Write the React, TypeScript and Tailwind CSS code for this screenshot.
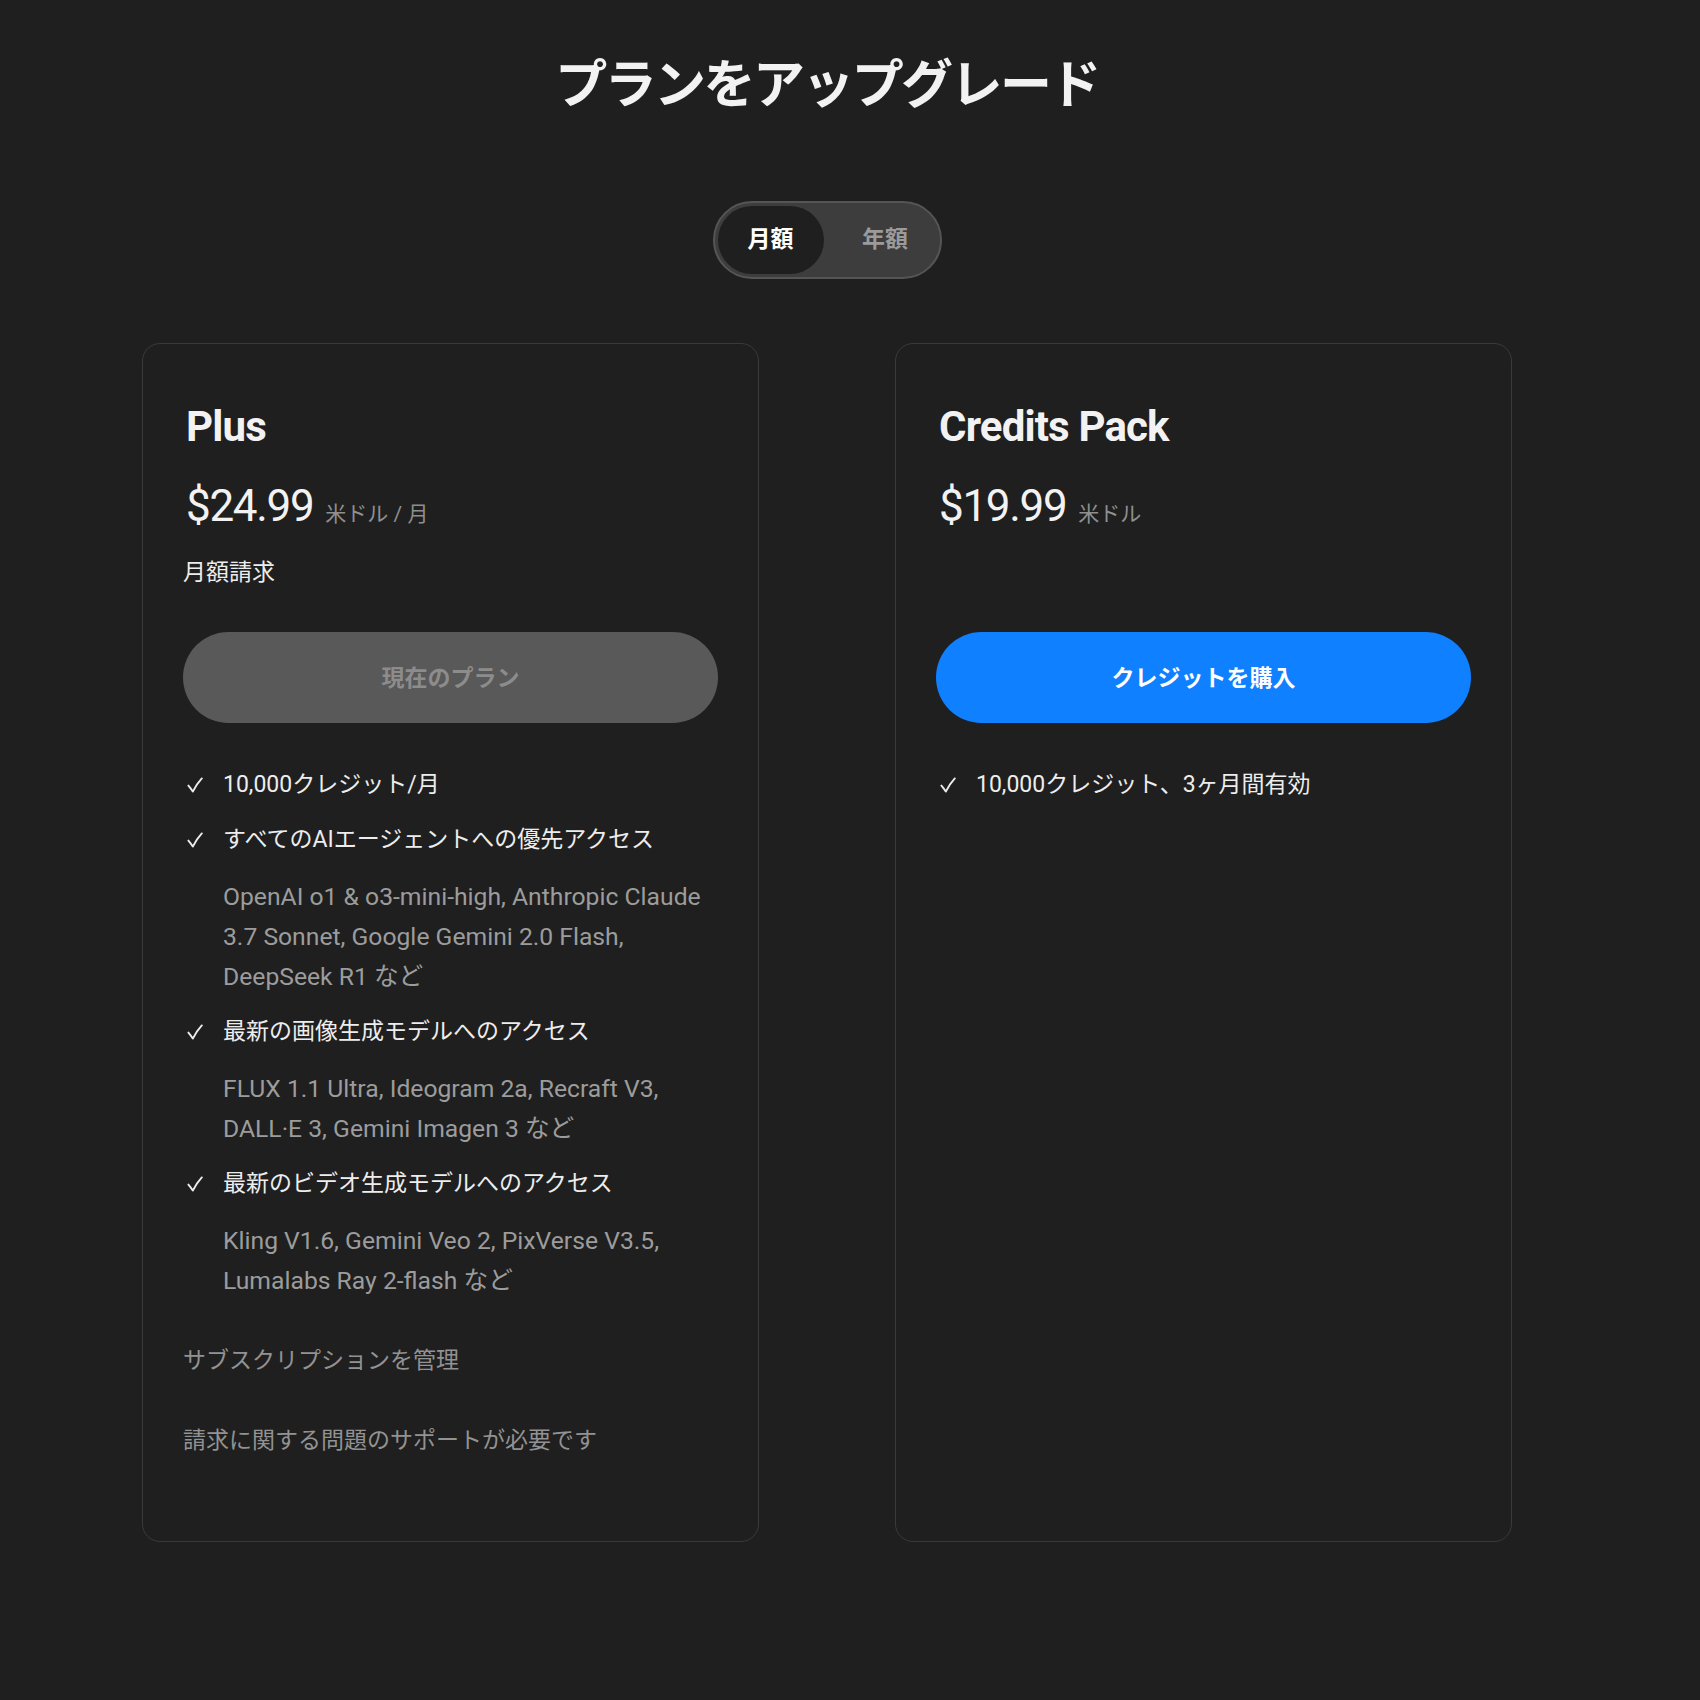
import React from "react";

function Check() {
  return (
    <svg width="16" height="16" viewBox="0 0 16 16" fill="none" className="ml-[4px]">
      <path
        d="M1.4 8.6 C2.9 10.3 4.4 12.4 5.8 14.6 C8.4 9.6 11.4 5.1 14.8 1.4"
        stroke="#ededed"
        strokeWidth="1.9"
        strokeLinecap="round"
        strokeLinejoin="round"
      />
    </svg>
  );
}

type Feature = { title: string; desc?: string };

function FeatureList({ items }: { items: Feature[] }) {
  return (
    <ul className="mt-[42px] flex flex-col gap-[15px]">
      {items.map((f) => (
        <li key={f.title} className="flex">
          <div className="flex h-[40px] w-[40px] shrink-0 items-center">
            <Check />
          </div>
          <div className="min-w-0 flex-1">
            <div className="text-[23px] leading-[40px] text-[#ededed]">{f.title}</div>
            {f.desc && (
              <div className="mt-[17px] text-[24.7px] leading-[40px] text-[#9c9c9c]">{f.desc}</div>
            )}
          </div>
        </li>
      ))}
    </ul>
  );
}

export default function App() {
  const plusFeatures: Feature[] = [
    { title: "10,000クレジット/月" },
    {
      title: "すべてのAIエージェントへの優先アクセス",
      desc: "OpenAI o1 & o3-mini-high, Anthropic Claude 3.7 Sonnet, Google Gemini 2.0 Flash, DeepSeek R1 など",
    },
    {
      title: "最新の画像生成モデルへのアクセス",
      desc: "FLUX 1.1 Ultra, Ideogram 2a, Recraft V3, DALL·E 3, Gemini Imagen 3 など",
    },
    {
      title: "最新のビデオ生成モデルへのアクセス",
      desc: "Kling V1.6, Gemini Veo 2, PixVerse V3.5, Lumalabs Ray 2-flash など",
    },
  ];

  return (
    <div className="min-h-[1700px] w-full bg-[#1f1f1f] font-[Roboto,'Noto_Sans_CJK_JP',sans-serif] text-[#ededed]">
      <div className="flex w-[1654px] flex-col items-center pt-[51px]">
        <h1 className="font-['Noto_Sans_CJK_JP',sans-serif] text-[52px] font-bold leading-[60px] tracking-[-0.05em] text-[#f2f2f2]">
          プランをアップグレード
        </h1>

        <div className="mt-[90px] flex rounded-full border-2 border-[#555555] bg-[#3d3d3d] p-[3px]">
          <div className="flex h-[68px] w-[106px] items-center justify-center rounded-full bg-[#1f1f1f] text-[23px] font-bold text-white">
            月額
          </div>
          <div className="flex h-[68px] w-[113px] items-center justify-center pl-[10px] text-[23px] font-bold text-[#9b9b9b]">
            年額
          </div>
        </div>

        <div className="mt-[64px] flex items-stretch gap-[136px]">
          {/* Plus card */}
          <div className="w-[617px] rounded-[18px] border border-[#3a3a3a] px-10 pb-[80px] pt-[58px]">
            <div className="pl-[3px] text-[42px] font-bold leading-[50px] tracking-[-0.02em] text-[#f2f2f2]">Plus</div>
            <div className="mt-[28px] flex h-[52px] items-baseline pl-[3px]">
              <span className="text-[44px] leading-[52px] tracking-[-0.03em] text-[#f2f2f2]">$24.99</span>
              <span className="ml-[12px] text-[21px] leading-none text-[#8f8f8f]">米ドル / 月</span>
            </div>
            <div className="mt-[25px] h-[32px] text-[23px] leading-[32px] text-[#ededed]">月額請求</div>
            <button className="mt-[43px] flex h-[91px] w-full items-center justify-center rounded-full bg-[#595959] pt-[4px] text-[23px] font-bold text-[#8c8c8c]">
              現在のプラン
            </button>
            <FeatureList items={plusFeatures} />
            <div className="mt-[40px] text-[23px] leading-[40px] text-[#929292]">サブスクリプションを管理</div>
            <div className="mt-[40px] text-[23px] leading-[40px] text-[#929292]">請求に関する問題のサポートが必要です</div>
          </div>

          {/* Credits card */}
          <div className="w-[617px] rounded-[18px] border border-[#3a3a3a] px-10 pb-[80px] pt-[58px]">
            <div className="pl-[3px] text-[42px] font-bold leading-[50px] tracking-[-0.02em] text-[#f2f2f2]">Credits Pack</div>
            <div className="mt-[28px] flex h-[52px] items-baseline pl-[3px]">
              <span className="text-[44px] leading-[52px] tracking-[-0.03em] text-[#f2f2f2]">$19.99</span>
              <span className="ml-[12px] text-[21px] leading-none text-[#8f8f8f]">米ドル</span>
            </div>
            <div className="mt-[25px] h-[32px]" />
            <button className="mt-[43px] flex h-[91px] w-full items-center justify-center rounded-full bg-[#0f80ff] pt-[4px] text-[23px] font-bold text-white">
              クレジットを購入
            </button>
            <FeatureList items={[{ title: "10,000クレジット、3ヶ月間有効" }]} />
          </div>
        </div>
      </div>
    </div>
  );
}
